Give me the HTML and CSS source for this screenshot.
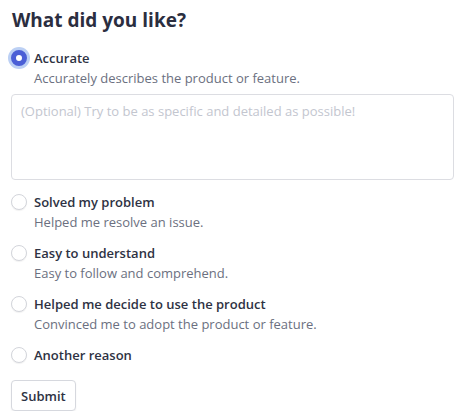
FILE: index.html
```html
<!DOCTYPE html>
<html>
<head>
<meta charset="utf-8">
<link rel="stylesheet" href="styles.css">
</head>
<body>
<form class="feedback">
  <h2 class="title">What did you like?</h2>
  <div class="options">
    <div class="option">
      <label class="row"><span class="radio checked"></span><span class="label">Accurate</span></label>
      <div class="desc">Accurately describes the product or feature.</div>
      <div class="textarea">(Optional) Try to be as specific and detailed as possible!</div>
    </div>
    <div class="option">
      <label class="row"><span class="radio"></span><span class="label">Solved my problem</span></label>
      <div class="desc">Helped me resolve an issue.</div>
    </div>
    <div class="option">
      <label class="row"><span class="radio"></span><span class="label">Easy to understand</span></label>
      <div class="desc">Easy to follow and comprehend.</div>
    </div>
    <div class="option">
      <label class="row"><span class="radio"></span><span class="label">Helped me decide to use the product</span></label>
      <div class="desc">Convinced me to adopt the product or feature.</div>
    </div>
    <div class="option">
      <label class="row"><span class="radio"></span><span class="label">Another reason</span></label>
    </div>
  </div>
  <button type="button" class="submit">Submit</button>
</form>
</body>
</html>
```
FILE: styles.css
```css
html, body { margin: 0; padding: 0; background: #fff; }
body { font-family: "Open Sans", "Noto Sans", sans-serif; color: #2e3243; }
.feedback { padding: 7px 11px 0 11px; }
.title { margin: 0 0 0 1px; font-size: 19px; font-weight: 700; line-height: 26px; color: #2b2e3f; }
.options { display: flex; flex-direction: column; gap: 11px; margin-top: 15px; }
.option { display: flex; flex-direction: column; }
.row { display: flex; align-items: center; gap: 7px; height: 20px; }
.radio { width: 16px; height: 16px; border-radius: 50%; border: 1px solid #d3d5db; box-sizing: border-box; background: #fff; flex: none; box-shadow: 0 1px 1px rgba(0,0,0,0.06); }
.radio.checked { border: 5px solid #4b5fd6; background: #fff; box-shadow: 0 0 0 3px #bcd0f4; }
.label { font-size: 13px; font-weight: 600; color: #2e3243; }
.desc { padding-left: 23px; font-size: 13px; line-height: 20px; color: #6b7080; }
.textarea { margin-top: 6px; margin-bottom: 1px; height: 86px; border: 1px solid #dcdde2; border-radius: 4px; padding: 6px 9px; box-sizing: border-box; font-size: 13px; line-height: 20px; color: #c3c6cf; }
.submit { margin-top: 15px; font-family: inherit; font-size: 13px; font-weight: 600; color: #2e3243; background: #fff; border: 1px solid #d6d8de; border-radius: 4px; padding: 0 9px; height: 31px; box-shadow: 0 1px 2px rgba(0,0,0,0.06); }
```
